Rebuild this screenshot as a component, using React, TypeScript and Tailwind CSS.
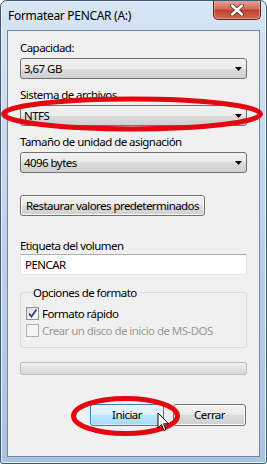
import React from "react"

function Combo({ value }: { value: string }) {
    return (
        <div className="flex h-[21px] items-center justify-between rounded-[3px] border border-[#707070] bg-[linear-gradient(#f2f2f2_0%,#ebebeb_50%,#dddddd_50%,#cfcfcf_100%)] pl-[3px] pr-[4px] leading-[15px]">
            <span>{value}</span>
            <svg width="7" height="4" viewBox="0 0 7 4">
                <path d="M0 0h7L3.5 4z" fill="#000" />
            </svg>
        </div>
    )
}

function Button({ label, hover }: { label: string; hover?: boolean }) {
    return (
        <div
            className={
                hover
                    ? "flex h-[22px] w-[74px] items-center justify-center rounded-[3px] border border-[#3c7fb1] bg-[linear-gradient(#eaf6fd_0%,#d9f0fc_50%,#bee6fd_50%,#a7d9f5_100%)] shadow-[inset_0_0_0_1px_#fcfcfc80]"
                    : "flex h-[22px] w-[73px] items-center justify-center rounded-[3px] border border-[#707070] bg-[linear-gradient(#f2f2f2_0%,#ebebeb_50%,#dddddd_50%,#cfcfcf_100%)] shadow-[inset_0_0_0_1px_#fcfcfc]"
            }
        >
            {label}
        </div>
    )
}

function Check({ checked, disabled, label }: { checked?: boolean; disabled?: boolean; label: string }) {
    return (
        <div className="flex h-[17px] items-center gap-[3px]">
            <div
                className={
                    disabled
                        ? "h-[13px] w-[13px] border border-[#b1b1b1] bg-[#f4f4f4]"
                        : "flex h-[13px] w-[13px] items-center justify-center border border-[#8e8f8f] bg-[linear-gradient(135deg,#dcdcdc,#ffffff)]"
                }
            >
                {checked && (
                    <svg width="11" height="11" viewBox="0 0 11 11">
                        <path d="M2 5.5 L4.5 8.5 L9.5 1.5" fill="none" stroke="#31448a" strokeWidth="1.8" />
                    </svg>
                )}
            </div>
            <span className={disabled ? "text-[#9a9a9a]" : "text-black"}>{label}</span>
        </div>
    )
}

export default function App() {
    return (
        <div className="relative flex h-[464px] w-[267px] flex-col overflow-hidden rounded-t-[7px] rounded-b-[3px] border border-[#3f5877] bg-[linear-gradient(#d7e5f4_0%,#c2d6ec_40%,#a9c3e2_100%)] px-[6px] pb-[6px] font-['Noto_Sans',sans-serif] text-[12px] text-black shadow-[inset_0_0_0_1px_#eef4fb]">
            {/* title bar */}
            <div className="flex h-[29px] items-start justify-between">
                <div className="pl-[1px] pt-[7px] leading-[15px] tracking-[-0.3px]">Formatear PENCAR (A:)</div>
                <div className="-mt-px mr-[-1px] flex h-[20px] w-[48px] items-center justify-center rounded-b-[5px] border border-t-0 border-[#5b2520] bg-[linear-gradient(#e7a89e_0%,#d66b5c_45%,#c0412f_55%,#d36a4f_100%)] shadow-[inset_0_0_0_1px_#f3c0b580]">
                    <svg width="14" height="12" viewBox="0 0 14 12">
                        <path d="M2 1.5 L12 10.5 M12 1.5 L2 10.5" stroke="#5a2a26" strokeWidth="4" strokeLinecap="round" />
                        <path d="M2 1.5 L12 10.5 M12 1.5 L2 10.5" stroke="#ffffff" strokeWidth="2.4" strokeLinecap="round" />
                    </svg>
                </div>
            </div>

            {/* client area */}
            <div className="flex flex-1 flex-col border border-[#6f87a6] bg-[#f0f0f0] px-[12px] pt-[9px] text-[11.5px] tracking-[-0.55px]">
                <div className="leading-[15px]">Capacidad:</div>
                <div className="mt-[3px]">
                    <Combo value="3,67 GB" />
                </div>
                <div className="mt-[8px] leading-[15px]">Sistema de archivos</div>
                <div className="mt-[3px]">
                    <Combo value="NTFS" />
                </div>
                <div className="mt-[8px] leading-[15px]">Tamaño de unidad de asignación</div>
                <div className="mt-[3px]">
                    <Combo value="4096 bytes" />
                </div>

                <div className="mt-[22px] flex h-[21px] w-[185px] items-center justify-center whitespace-nowrap rounded-[3px] border border-[#707070] bg-[linear-gradient(#f2f2f2_0%,#ebebeb_50%,#dddddd_50%,#cfcfcf_100%)] shadow-[inset_0_0_0_1px_#fcfcfc]">
                    Restaurar valores predeterminados
                </div>

                <div className="mt-[22px] leading-[15px]">Etiqueta del volumen</div>
                <div className="mt-px flex h-[21px] items-center border border-[#abadb3] border-r-[#dbdfe6] border-b-[#e3e9ef] border-l-[#e2e3ea] bg-white pl-[4px]">
                    PENCAR
                </div>

                <fieldset className="mt-[10px] rounded-[3px] border border-[#d5dfe5] pb-[8px] pl-[5px]">
                    <legend className="ml-[5px] px-[2px] leading-[15px]">Opciones de formato</legend>
                    <div className="mt-[5px] flex flex-col">
                        <Check checked label="Formato rápido" />
                        <Check disabled label="Crear un disco de inicio de MS-DOS" />
                    </div>
                </fieldset>

                <div className="mt-[14px] h-[13px] rounded-[2px] border border-[#bcbcbc] bg-[linear-gradient(#f3f3f3_0%,#e2e2e2_50%,#d6d6d6_100%)]" />

                <div className="mr-px mt-[29px] flex justify-end gap-[9px]">
                    <Button label="Iniciar" hover />
                    <Button label="Cerrar" />
                </div>
            </div>

            {/* red annotation rings + cursor */}
            <svg className="pointer-events-none absolute left-[-1px] top-[-1px]" width="267" height="464" viewBox="0 0 267 464">
                <ellipse cx="132" cy="114" rx="128.5" ry="15" fill="none" stroke="#e3070f" strokeWidth="5" />
                <ellipse cx="125.5" cy="416" rx="52" ry="17.5" fill="none" stroke="#e3070f" strokeWidth="5" />
                <path
                    d="M158 413 L158 428 L161.5 424.5 L164 430.5 L166 429.6 L163.6 423.8 L168.5 423.8 Z"
                    fill="#ffffff"
                    stroke="#000000"
                    strokeWidth="1"
                    strokeLinejoin="round"
                />
            </svg>
        </div>
    )
}
